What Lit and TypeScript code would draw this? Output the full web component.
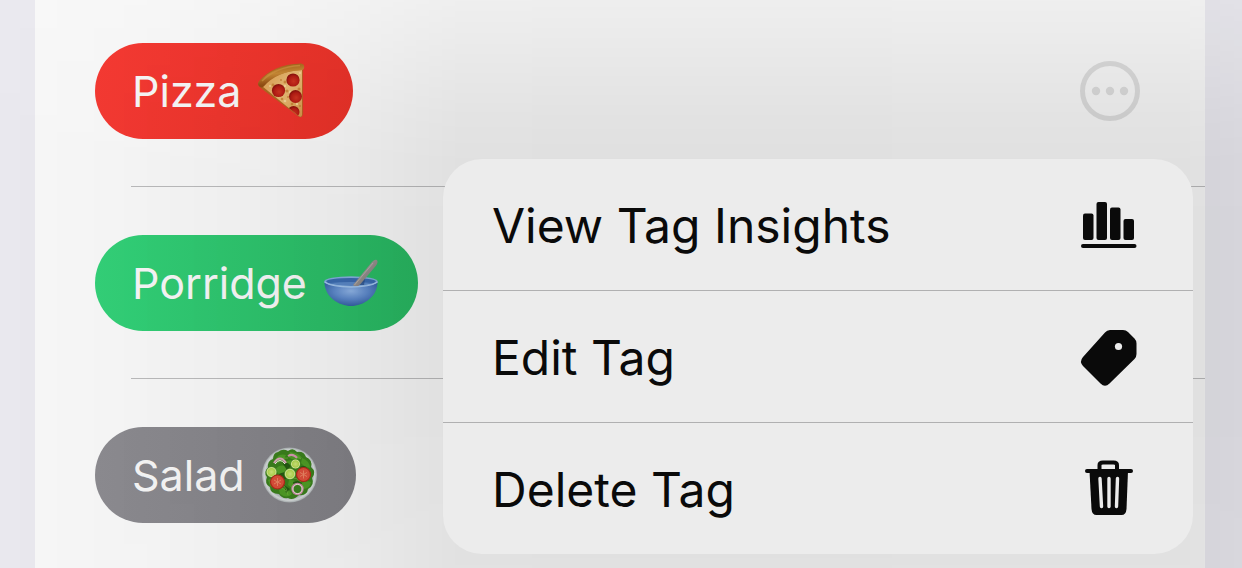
import { LitElement, html, css, svg } from "lit";
import { customElement } from "lit/decorators.js";

const pizza = html`<svg class="emoji" viewBox="0 0 58 58" aria-hidden="true">
  <defs>
    <linearGradient id="crust" x1="0" y1="0" x2=".25" y2="1">
      <stop offset="0" stop-color="#a8651c" /><stop offset=".45" stop-color="#c98a35" /><stop offset="1" stop-color="#945014" />
    </linearGradient>
    <linearGradient id="cheese" x1="0" y1="0" x2="1" y2="1">
      <stop offset="0" stop-color="#dc9c4c" /><stop offset=".5" stop-color="#eabd77" /><stop offset="1" stop-color="#d5964a" />
    </linearGradient>
    <radialGradient id="pep" cx=".55" cy=".6" r=".55">
      <stop offset="0" stop-color="#cf3422" /><stop offset=".7" stop-color="#b51d14" /><stop offset="1" stop-color="#8e130d" />
    </radialGradient>
    <clipPath id="slice"><path d="M4 24Q19 9 44 8V53Q43.500 56 40.500 54Z" /></clipPath>
  </defs>
  <path d="M1 24Q-.5 22 1 19Q16 2 43 1.500Q44.800 1.500 44.800 4V52Q44 57 40 54L4 27Z" fill="#b06a22" />
  <path d="M4 24Q19 9 44 8V53Q43.500 56 40.500 54Z" fill="url(#cheese)" />
  <g clip-path="url(#slice)">
    <g fill="#c07a2c" opacity=".7">
      <circle cx="27" cy="20" r="1.500" /><circle cx="15" cy="23" r="1.400" /><circle cx="29" cy="29" r="1.600" />
      <circle cx="24" cy="37" r="1.300" /><circle cx="34" cy="42" r="1.300" /><circle cx="41" cy="27" r="1.500" />
      <circle cx="30" cy="35" r="1" /><circle cx="23" cy="18" r="1" /><circle cx="42" cy="44" r="1" />
    </g>
    <g fill="#f6dba0" opacity=".8">
      <circle cx="27" cy="24" r="1.200" /><circle cx="32" cy="30" r="1.200" /><circle cx="27" cy="39" r="1.300" />
      <circle cx="39" cy="42" r="1.200" /><circle cx="12" cy="24" r="1" /><circle cx="42" cy="11" r="1" />
    </g>
    <circle cx="35" cy="18" r="6.600" fill="url(#pep)" /><circle cx="20.500" cy="28.500" r="6.600" fill="url(#pep)" />
    <circle cx="37.500" cy="34.500" r="6.500" fill="url(#pep)" /><circle cx="35.500" cy="50" r="6" fill="url(#pep)" />
  </g>
  <path d="M3.500 22Q18 6 43 5" fill="none" stroke="url(#crust)" stroke-width="6.500" stroke-linecap="round" />
  <path d="M4 19Q18 5 42 3.500" fill="none" stroke="#cf9541" stroke-width="1.500" opacity=".7" />
</svg>`;

const bowl = html`<svg class="emoji" viewBox="0 -3 58 58" aria-hidden="true">
  <defs>
    <radialGradient id="glaze" cx=".5" cy=".4" r=".6">
      <stop offset="0" stop-color="#8fb4e6" /><stop offset=".55" stop-color="#5c88ca" /><stop offset="1" stop-color="#3560a4" />
    </radialGradient>
    <linearGradient id="spoon" x1="0" y1="0" x2="1" y2="1">
      <stop offset="0" stop-color="#b8b2b0" /><stop offset=".5" stop-color="#958f8d" /><stop offset="1" stop-color="#746f6d" />
    </linearGradient>
  </defs>
  <path d="M1.500 24C1 40 16 49 28 49S55 40 54.500 24Z" fill="url(#glaze)" />
  <ellipse cx="28" cy="24.500" rx="26.800" ry="5.200" fill="#84addf" />
  <ellipse cx="28" cy="24.500" rx="24.800" ry="3.600" fill="#3b6bb0" />
  <path d="M7 26Q28 32 49 26Q28 24 7 26Z" fill="#5a88c7" />
  <path d="M39 21L42 22L41 28L34 28Z" fill="#264b83" opacity=".7" />
  <path d="M30 28L49 5Q53 1 54.500 4Q55 7 51 11L37.500 27Q33 32 30 28Z" fill="url(#spoon)" />
  <path d="M31.500 28L50 6" stroke="#c6c0be" stroke-width="1" opacity=".6" />
  <path d="M1.500 25Q9 30 28 30T54.500 25" fill="none" stroke="#a3c5ec" stroke-width="1.400" />
</svg>`;

const salad = html`<svg class="emoji" viewBox="0 0 58 58" aria-hidden="true">
  <defs>
    <radialGradient id="plate"><stop offset=".8" stop-color="#a3adac" /><stop offset=".92" stop-color="#d6dbdb" /><stop offset="1" stop-color="#a8aeb0" /></radialGradient>
    <radialGradient id="cuke"><stop offset="0" stop-color="#d0e67e" /><stop offset=".65" stop-color="#b2d850" /><stop offset=".8" stop-color="#d4ea96" /><stop offset="1" stop-color="#4f9126" /></radialGradient>
  </defs>
  <circle cx="28.500" cy="29" r="27.500" fill="url(#plate)" />
  <path d="M17 6Q22 2 27 5Q32 1 36 6Q43 5 45 11Q52 14 50 21Q56 26 51 32Q54 39 47 43Q46 50 38 49Q32 55 27 52Q21 53 18 48Q9 48 9 41Q3 38 6 31Q2 26 7 22Q6 15 12 13Q12 7 17 6Z" fill="#3b801d" />
  <g fill="#4f9c26">
    <path d="M14 14Q18 7 25 9Q23 15 15 18Z" /><path d="M29 6Q38 7 41 12Q34 16 27 11Z" /><path d="M41 12Q49 15 49 22Q43 21 40 17Z" />
    <path d="M7 34Q12 31 18 37Q13 43 9 40Z" /><path d="M28 34Q36 33 37 40Q30 43 27 39Z" /><path d="M18 44Q25 39 31 48Q26 53 19 48Z" /><path d="M40 37Q47 34 50 36Q49 43 42 43Z" />
    <path d="M14 24Q19 17 26 21Q24 28 18 28Z" /><path d="M24 16Q31 12 34 17Q30 22 26 20Z" />
  </g>
  <g fill="#255b12">
    <path d="M22 18Q26 14 30 20L26 24Z" /><path d="M18 28Q24 24 27 30Q25 35 20 33Z" /><path d="M32 36Q39 33 41 38Q36 43 33 40Z" /><path d="M39 21Q45 18 47 24L42 26Z" /><path d="M23 39L29 43L25 47Z" />
  </g>
  <g stroke="#70b43b" stroke-width="1" fill="none" opacity=".7"><path d="M16 15Q22 11 27 12M31 9Q36 9 40 13M14 43Q19 39 25 45M27 49Q26 42 22 39M30 32Q36 31 40 36" /></g>
  <path d="M13 17Q19 8 25 17" fill="none" stroke="#dca5ba" stroke-width="2.200" /><path d="M14 18Q19 11 24 18" fill="none" stroke="#f1ebe7" stroke-width="1" />
  <path d="M27 10Q32 7 36 12" fill="none" stroke="#d797b1" stroke-width="2" />
  <circle cx="34.500" cy="18" r="5" fill="url(#cuke)" /><circle cx="10.500" cy="26" r="5.500" fill="url(#cuke)" /><circle cx="29" cy="28" r="5.800" fill="url(#cuke)" />
  <g stroke="#b22a1a" stroke-width="1.200"><circle cx="16.500" cy="36" r="7" fill="#dd4f3a" /><circle cx="42.500" cy="28.500" r="7" fill="#dd4f3a" /></g>
  <g stroke="#f09a74" stroke-width="1" opacity=".7"><path d="M16.500 32V40M13 34L20 38M20 34L13 38M42.500 24.500V32.500M39 26.500L46 30.500M46 26.500L39 30.500" /></g>
  <circle cx="36.500" cy="43" r="5.200" fill="#3c8220" stroke="#c98aa4" stroke-width="2" /><circle cx="36.500" cy="43" r="4.600" fill="none" stroke="#eae3da" stroke-width="1" />
</svg>`;

const insightsIcon = svg`<rect x="4" y="17.500" width="10.500" height="26.500" rx="2" /><rect x="17.500" y="6" width="10.500" height="38" rx="2" />
  <rect x="31" y="11.500" width="10.500" height="32.500" rx="2" /><rect x="44.500" y="23" width="10.500" height="21" rx="2" /><rect x="2" y="48" width="55.500" height="4" rx="2" />`;

const tagIcon = svg`<path d="M31 2H44Q47 2 49 4L55.500 10.500Q57.500 12.500 57.500 15.500V26Q57.500 29 55.500 31L30.500 55.500Q26 60 21.500 55.500L4 38Q0 33.500 4 29L26 4.500Q28 2 31 2Z" />
  <circle cx="39.500" cy="18.500" r="3.600" fill="#ececec" />`;

const trashIcon = svg`<path d="M20.500 10V5Q20.500 2.500 24 2.500H34.500Q38 2.500 38 5V10" fill="none" stroke="currentColor" stroke-width="4" />
  <rect x="6" y="9" width="48" height="4" rx="2" />
  <path d="M10.500 11H49L47.500 49Q47 55 42.500 55H17.500Q13 55 12.500 49Z" />
  <g fill="none" stroke="#ececec" stroke-width="3.400" stroke-linecap="round"><path d="M21 18.500L22.500 46.500M30 18.500V46.500M38.500 18.500L37.500 46.500" /></g>`;

const tags = [
  { name: "Pizza", tone: "red", emoji: pizza },
  { name: "Porridge", tone: "green", emoji: bowl },
  { name: "Salad", tone: "gray", emoji: salad },
];

const actions = [
  { label: "View Tag Insights", icon: insightsIcon },
  { label: "Edit Tag", icon: tagIcon },
  { label: "Delete Tag", icon: trashIcon },
];

@customElement("app-root")
export class AppRoot extends LitElement {
  static styles = css`
    :host {
      display: block;
      position: relative;
      height: 100vh;
      overflow: hidden;
      box-sizing: border-box;
      padding: 0 37px 0 35px;
      background: #ebeaf0;
      font-family: Inter, "Liberation Sans", sans-serif;
    }
    button {
      border: 0;
      margin: 0;
      padding: 0;
      background: none;
      font: inherit;
      color: inherit;
      cursor: pointer;
    }
    .list {
      list-style: none;
      margin: 0;
      padding: 0;
      background: #f9f9f9;
    }
    .row {
      display: flex;
      align-items: center;
      justify-content: space-between;
      padding: 48px 65px 47px 60px;
    }
    .item:first-child .row {
      padding-top: 43px;
    }
    .item::after {
      content: "";
      display: block;
      height: 1px;
      margin-left: 96px;
      background: #bcbcbd;
    }
    .pill {
      display: flex;
      align-items: center;
      gap: 16px;
      height: 96px;
      padding: 0 37px 0 37px;
      border-radius: 48px;
      font-size: 43px;
      line-height: 56px;
      color: #f8f8f8;
    }
    .red { background: linear-gradient(100deg, #f63a33, #ea3229); }
    .green { background: linear-gradient(90deg, #33d279, #29b862); }
    .gray { background: linear-gradient(90deg, #8d8c91, #828186); }
    .emoji {
      width: 58px;
      height: 58px;
    }
    .more {
      width: 60px;
      height: 60px;
      color: #dedede;
    }
    .more svg {
      display: block;
    }
    /* Soft shadow around the menu: falls off to the left and to the top. */
    .shade {
      position: absolute;
      inset: 0;
      pointer-events: none;
      background: linear-gradient(
        270deg,
        rgba(0, 0, 0, 0.085) 0,
        rgba(0, 0, 0, 0.1) 60px,
        rgba(0, 0, 0, 0.105) 640px,
        rgba(0, 0, 0, 0.1) 780px,
        rgba(0, 0, 0, 0.09) 820px,
        rgba(0, 0, 0, 0.067) 890px,
        rgba(0, 0, 0, 0.042) 990px,
        rgba(0, 0, 0, 0.02) 1130px,
        rgba(0, 0, 0, 0.008) 1240px
      );
      mask-image: linear-gradient(
        180deg,
        rgba(0, 0, 0, 0.4) 0,
        rgba(0, 0, 0, 0.58) 50px,
        rgba(0, 0, 0, 0.82) 110px,
        rgba(0, 0, 0, 0.95) 160px,
        #000 240px,
        #000 400px,
        rgba(0, 0, 0, 0.9) 568px
      );
    }
    .menu {
      position: absolute;
      top: 159px;
      right: 49px;
      width: 750px;
      border-radius: 39px;
      background: #ececec;
      color: #0a0a0a;
    }
    .action {
      display: flex;
      align-items: center;
      justify-content: space-between;
      width: 100%;
      height: 131px;
      padding: 2px 54px 0 49px;
      font-size: 48px;
      line-height: 60px;
    }
    .action + .action {
      height: 132px;
      border-top: 1px solid #b0b0b1;
    }
    .glyph {
      width: 60px;
      height: 60px;
      fill: currentColor;
    }
  `;

  render() {
    return html`
      <ul class="list">
        ${tags.map(
          (tag) => html`<li class="item">
            <div class="row">
              <button class="pill ${tag.tone}"><span>${tag.name}</span>${tag.emoji}</button>
              <button class="more" aria-label="More options for ${tag.name}">
                <svg viewBox="0 0 60 60" width="60" height="60" fill="currentColor" aria-hidden="true">
                  <circle cx="30" cy="30" r="27.500" fill="none" stroke="currentColor" stroke-width="5" />
                  <circle cx="16" cy="30" r="4.200" /><circle cx="30" cy="30" r="4.200" /><circle cx="44" cy="30" r="4.200" />
                </svg>
              </button>
            </div>
          </li>`
        )}
      </ul>
      <div class="shade"></div>
      <div class="menu" role="menu">
        ${actions.map(
          (action) => html`<button class="action" role="menuitem">
            <span>${action.label}</span>
            <svg class="glyph" viewBox="0 0 60 60" aria-hidden="true">${action.icon}</svg>
          </button>`
        )}
      </div>
    `;
  }
}
